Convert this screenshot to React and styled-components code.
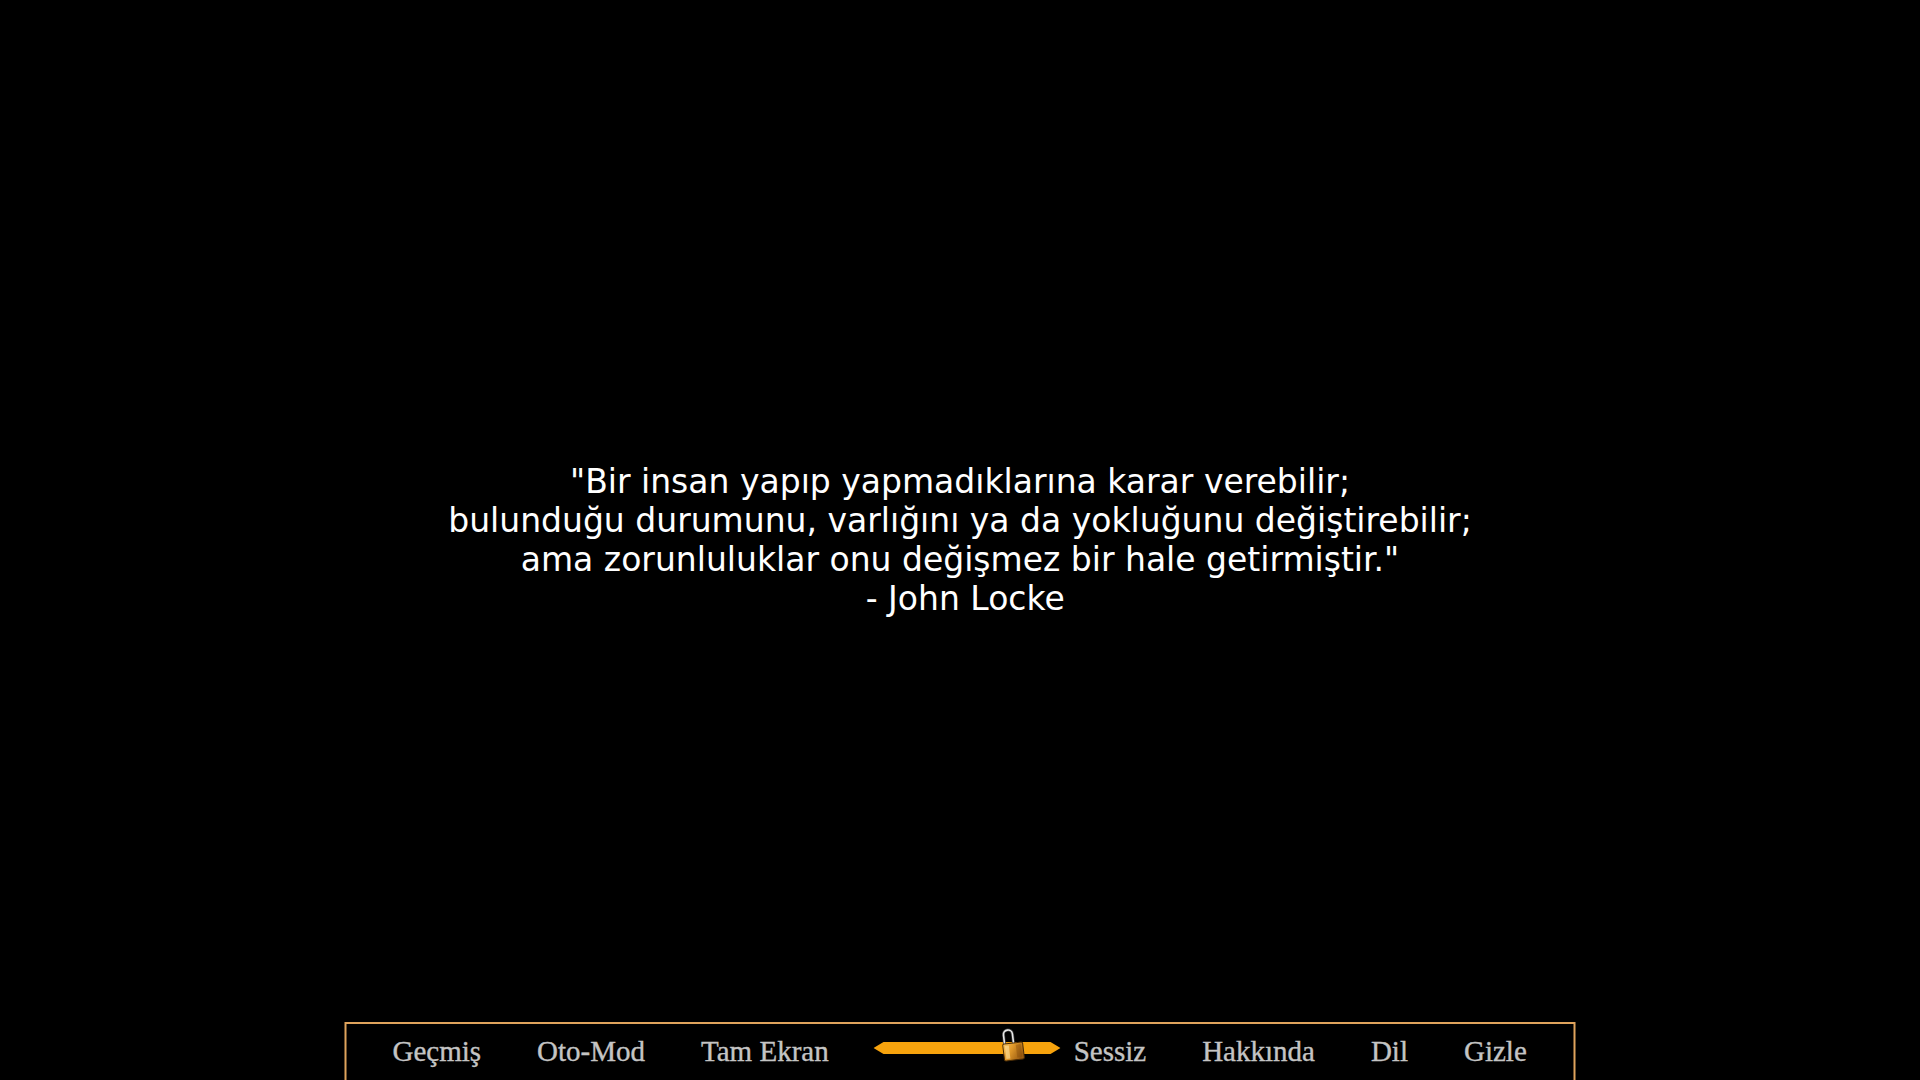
import React from "react";
import styled, { createGlobalStyle } from "styled-components";

const GlobalStyle = createGlobalStyle`
  html, body {
    margin: 0;
    padding: 0;
    background: #000;
  }
  body {
    font-family: "DejaVu Sans", sans-serif;
    overflow: hidden;
  }
`;

const Screen = styled.div`
  position: relative;
  width: 100vw;
  height: 100vh;
  background: #000;
  display: flex;
  align-items: center;
  justify-content: center;
  overflow: hidden;
`;

const Quote = styled.p`
  margin: 0;
  color: #fff;
  font-family: "DejaVu Sans", sans-serif;
  font-size: 33px;
  line-height: 39px;
  text-align: center;
  white-space: pre-line;
`;

const QuickMenu = styled.nav`
  position: absolute;
  left: 50%;
  top: 1022px;
  transform: translateX(-50%);
  width: 1231px;
  height: 80px;
  box-sizing: border-box;
  border: 2px solid #dfa35c;
  background: #000;
  display: flex;
  align-items: flex-start;
  padding: 11px 0 0 46px;
  gap: 56px;
`;

const MenuButton = styled.button`
  background: none;
  border: 0;
  padding: 0;
  color: #c4c4c4;
  font-family: "Liberation Serif", serif;
  font-size: 29px;
  line-height: 32px;
  -webkit-text-stroke: 0.35px #c4c4c4;
  cursor: pointer;
`;

const VolumeSlider = styled.div`
  position: relative;
  width: 187px;
  height: 36px;
  margin: 0 -43px 0 -11px;
`;

const Track = styled.svg`
  position: absolute;
  left: 0;
  top: 7px;
  width: 187px;
  height: 12px;
`;

const Lock = styled.svg`
  position: absolute;
  left: 128px;
  top: -8px;
  width: 24px;
  height: 35px;
`;

const items = ["Geçmiş", "Oto-Mod", "Tam Ekran"];
const rest = ["Sessiz", "Hakkında", "Dil", "Gizle"];

export default function App() {
  return (
    <Screen>
      <GlobalStyle />
      <Quote>
        {`"Bir insan yapıp yapmadıklarına karar verebilir;
bulunduğu durumunu, varlığını ya da yokluğunu değiştirebilir;
ama zorunluluklar onu değişmez bir hale getirmiştir."
\u00a0- John Locke`}
      </Quote>
      <QuickMenu>
        {items.map((t) => (
          <MenuButton key={t}>{t}</MenuButton>
        ))}
        <VolumeSlider>
          <Track viewBox="0 0 187 12">
            <polygon points="0,6 10,0 177,0 187,6 177,12 10,12" fill="#f7a30d" />
          </Track>
          <Lock viewBox="0 0 24 35">
            <defs>
              <linearGradient id="lockBody" x1="0" y1="0" x2="1" y2="0.6">
                <stop offset="0" stopColor="#f8c765" />
                <stop offset="0.45" stopColor="#e0992a" />
                <stop offset="1" stopColor="#9a5c12" />
              </linearGradient>
            </defs>
            <g transform="rotate(-7 12 24)">
              <path
                d="M4 18 V7 C4 1 13 1 13 7 V18"
                fill="none"
                stroke="#3a3a3a"
                strokeWidth="3"
              />
              <path
                d="M4 18 V7 C4 1 13 1 13 7 V18"
                fill="none"
                stroke="#e8e8e8"
                strokeWidth="1.6"
              />
              <rect x="2" y="16" width="20" height="17" rx="1.5" fill="url(#lockBody)" stroke="#4a2c06" strokeWidth="1" />
              <rect x="4" y="18" width="4" height="13" fill="#fde3a0" opacity="0.6" />
              <rect x="15" y="18" width="5" height="13" fill="#7a4608" opacity="0.35" />
            </g>
          </Lock>
        </VolumeSlider>
        {rest.map((t) => (
          <MenuButton key={t}>{t}</MenuButton>
        ))}
      </QuickMenu>
    </Screen>
  );
}
